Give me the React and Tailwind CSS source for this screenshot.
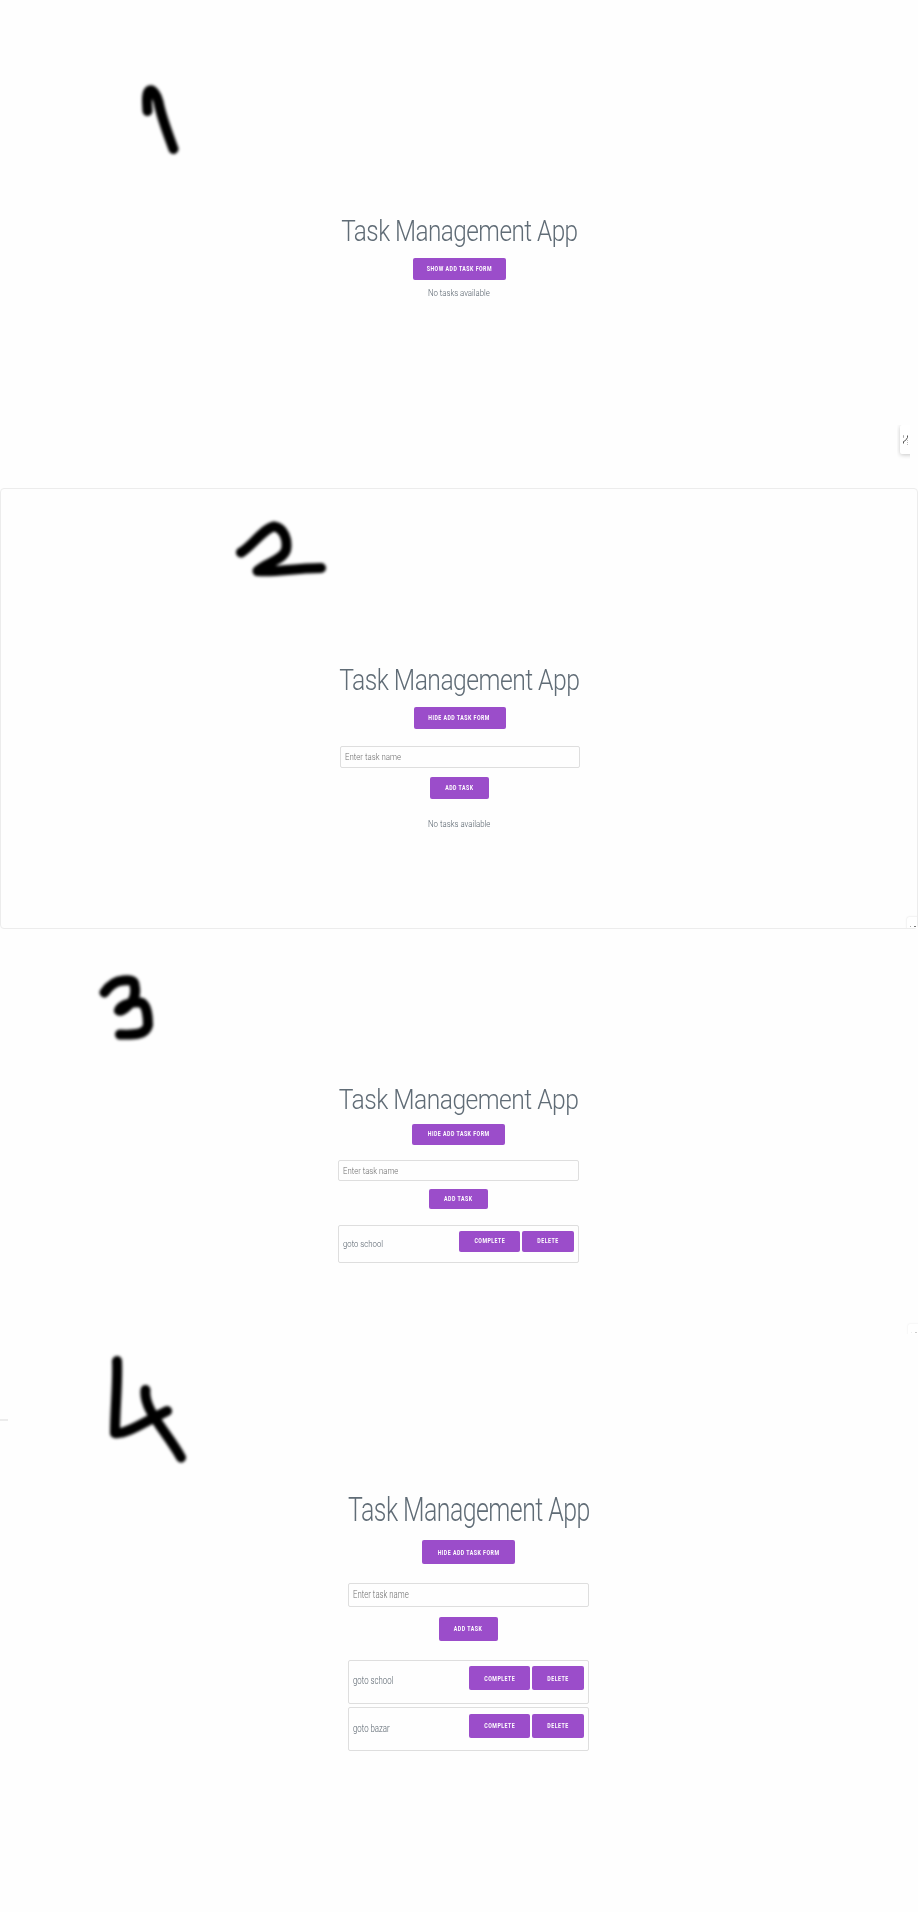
import React from "react";

function Label({ children, className = "" }) {
  return <span className={`block whitespace-nowrap ${className}`}>{children}</span>;
}

function Heading() {
  return (
    <h1 className="flex h-8 w-full items-center justify-center text-[length:var(--h1)] leading-8 font-light tracking-[-0.0217em] text-[#606c76]">
      <Label className="origin-center scale-x-[var(--sh)]">Task Management App</Label>
    </h1>
  );
}

function Button({ children, className }) {
  return (
    <button
      className={`flex h-[var(--bh)] shrink-0 items-center justify-center rounded-[2px] bg-[#9b4dca] text-[length:var(--bt)] leading-none font-bold tracking-[0.0909em] text-white uppercase ${className}`}
    >
      <Label className="origin-center scale-x-[var(--sb)]">{children}</Label>
    </button>
  );
}

function Field({ className }) {
  return (
    <div
      className={`flex h-[var(--bh)] items-center rounded-[2px] border border-[#dedede] pl-[4.2px] text-[length:var(--p)] leading-none font-light text-[#6c6c6c] ${className}`}
    >
      <Label className="origin-left scale-x-[var(--sp)]">Enter task name</Label>
    </div>
  );
}

function Empty({ className }) {
  return (
    <p
      className={`flex h-3 justify-center text-[length:var(--p)] leading-3 font-light text-[#56616b] ${className}`}
    >
      <Label className="origin-center scale-x-[var(--sp)]">No tasks available</Label>
    </p>
  );
}

function Task({ name, className }) {
  return (
    <li
      className={`flex justify-between rounded-[2px] border border-[#dedede] pr-[4.2px] pl-[4.2px] text-[length:var(--p)] font-light text-[#56616b] ${className}`}
    >
      <div className="flex items-center leading-none">
        <Label className="origin-left scale-x-[var(--sp)]">{name}</Label>
      </div>
      <div className="flex gap-[2.2px] pt-[5.4px]">
        <Button className="w-[61px]">Complete</Button>
        <Button className="w-[51.5px]">Delete</Button>
      </div>
    </li>
  );
}

function Stroke({ className, box, d }) {
  return (
    <svg
      className={`absolute overflow-visible blur-[1.8px] ${className}`}
      viewBox={box}
      fill="none"
      stroke="#000"
      strokeWidth="10"
      strokeLinecap="round"
      strokeLinejoin="round"
    >
      <path d={d} />
    </svg>
  );
}

export default function App() {
  return (
    <main className="h-[1912px] w-[918px] overflow-hidden bg-[#fefefe] font-[Roboto,sans-serif]">
      <section className="relative h-[488px] pt-[215px] [--bh:22px] [--bt:6.8px] [--h1:29.3px] [--p:9.8px] [--sb:0.77] [--sh:0.83] [--sp:0.795]">
        <Stroke
          className="top-[71px] left-[120px] h-[100px] w-[80px]"
          box="0 0 80 100"
          d="M27.5 40C27 32 26 22 29.5 19.5C33 18 37 25 38.5 31C41 45 48 63 53.5 78"
        />
        <div className="ml-[340px] flex w-[238.500px] flex-col items-center">
          <Heading />
          <Button className="mt-[11px] w-[93.500px]">Show Add Task Form</Button>
          <Empty className="mt-[7px]" />
        </div>
        <div className="absolute top-[425px] left-[897px] h-[36px] w-[13px] overflow-hidden">
          <div className="ml-[3px] h-[29px] w-5 rounded-[2px] bg-white shadow-[0_1px_4px_rgba(0,0,0,0.22)]">
            <svg className="h-[28px] w-[10px]" viewBox="0 0 10 28" fill="none" stroke="#555" strokeWidth="1">
              <path d="M3.500 18.500V16.500L5.500 15.500L7.500 12.500V10.500M3.500 11.500V13" />
              <path d="M3.500 10V13M7.500 15V20" stroke="#bbb" strokeDasharray="1 1" />
            </svg>
          </div>
        </div>
      </section>

      <section className="relative h-[441px] rounded-[4px] border border-[#ececec] pt-[174.500px] [--bh:22px] [--bt:6.8px] [--h1:29.7px] [--p:9.9px] [--sb:0.77] [--sh:0.832] [--sp:0.795]">
        <Stroke
          className="top-[11.500px] left-[219px] h-[90px] w-[120px]"
          box="0 0 120 90"
          d="M21 51.5C31 46 44 27 54 25.5C64 27 68 39 66 49C62 60 45 62 37.5 70C56 72 72 67 101 67"
        />
        <div className="ml-[338.500px] flex w-[240px] flex-col items-center">
          <Heading />
          <Button className="mt-[11.500px] w-[92px]">Hide Add Task Form</Button>
          <Field className="mt-[17px] w-[240px]" />
          <Button className="mt-[9px] w-[58.5px]">Add Task</Button>
          <Empty className="mt-[18.800px]" />
        </div>
        <div className="absolute right-0 bottom-0 h-[13px] w-[12px] overflow-hidden">
          <div className="mt-[2px] ml-[2px] flex h-5 w-5 gap-[3px] rounded-[2px] bg-white pt-[9px] pl-[3px] shadow-[0_0_2px_rgba(0,0,0,0.16)]">
            <span className="h-px w-px bg-[#aaa]" />
            <span className="h-px w-[2px] bg-[#777]" />
          </div>
        </div>
      </section>

      <section className="relative h-[411px] pt-[154.600px] [--bh:20.4px] [--bt:6.4px] [--h1:27.7px] [--p:9.3px] [--sb:0.82] [--sh:0.89] [--sp:0.835]">
        <Stroke
          className="top-[31.500px] left-[80px] h-[90px] w-[90px]"
          box="0 0 90 90"
          d="M24.500 31.500C29 25 35 20 43 19.500C50 19 54 19 54.500 24C56 31 55 36 52.500 40C48 45 42 51 39 49.500C41 43 56 40 62 42C67 45 68 57 68 64C66 74 54 74 40 73.500"
        />
        <div className="ml-[338px] flex w-[241px] flex-col items-center">
          <Heading />
          <Button className="mt-[8.600px] w-[92.500px]">Hide Add Task Form</Button>
          <Field className="mt-[15.800px] w-[241px]" />
          <Button className="mt-[8.300px] w-[59px]">Add Task</Button>
          <ul className="mt-[15.600px] w-full">
            <Task name="goto school" className="h-[38px]" />
          </ul>
        </div>
        <div className="absolute right-0 bottom-[6px] h-[12px] w-[12px] overflow-hidden">
          <div className="mt-[2px] ml-[2px] flex h-5 w-5 gap-[3px] rounded-[2px] bg-white pt-[8px] pl-[3px] shadow-[0_0_2px_rgba(0,0,0,0.1)]">
            <span className="h-px w-px bg-[#eee]" />
            <span className="h-px w-[2px] bg-[#ccc]" />
          </div>
        </div>
      </section>

      <section className="relative h-[572px] pt-[154.2px] [--bh:24.2px] [--bt:7.4px] [--h1:32.5px] [--p:10.8px] [--sb:0.71] [--sh:0.765] [--sp:0.725]">
        <Stroke
          className="top-px left-[90px] h-[140px] w-[110px]"
          box="0 0 110 140"
          d="M27 20C28 42 25 68 25 92C36 94 56 80 77 70M55.500 49C53 69 78 92 91 116.500"
        />
        <div className="absolute top-[79px] left-0 h-[2px] w-2 bg-[#ececec]" />
        <div className="ml-[348px] flex w-[241px] flex-col items-center">
          <Heading />
          <Button className="mt-[14px] w-[93px]">Hide Add Task Form</Button>
          <Field className="mt-[18.800px] w-[241px]" />
          <Button className="mt-[9.600px] w-[59px]">Add Task</Button>
          <ul className="mt-[18.600px] flex w-full flex-col gap-[3.500px]">
            <Task name="goto school" className="h-[44px]" />
            <Task name="goto bazar" className="h-[44px]" />
          </ul>
        </div>
      </section>
    </main>
  );
}
